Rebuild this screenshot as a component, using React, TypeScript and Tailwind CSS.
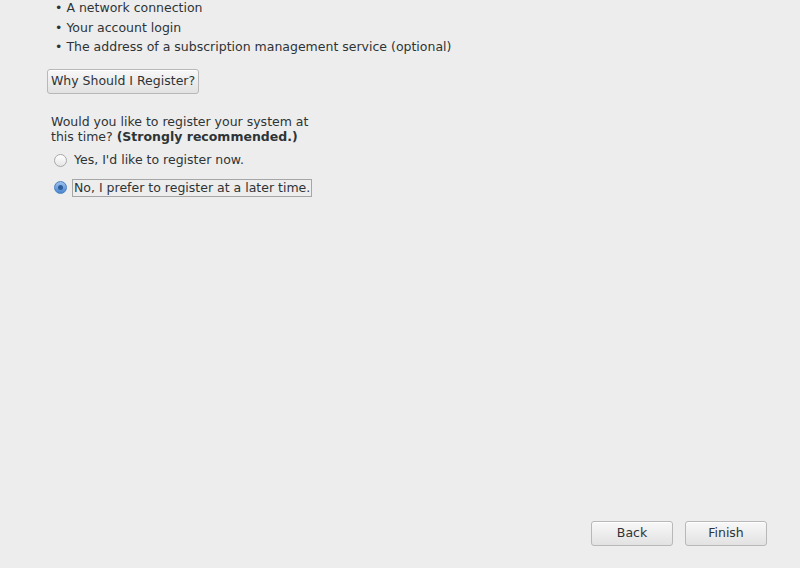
const bullets = [
  'A network connection',
  'Your account login',
  'The address of a subscription management service (optional)',
];

function Radio({ checked }: { checked: boolean }) {
  return checked ? (
    <span className="w-[13px] h-[13px] rounded-full border border-[#4a7fc0] bg-gradient-to-b from-[#9cc0ec] to-[#4a86d0] flex items-center justify-center shrink-0">
      <span className="w-[5px] h-[5px] rounded-full bg-[#2d5d9c]" />
    </span>
  ) : (
    <span className="w-[13px] h-[13px] rounded-full border border-[#a8a8a8] bg-gradient-to-b from-[#ffffff] to-[#e6e6e6] shrink-0" />
  );
}

function Button({ label, className }: { label: string; className: string }) {
  return (
    <button
      className={`h-[25px] rounded-[3px] border border-[#b8b8b8] bg-gradient-to-b from-[#f8f8f8] to-[#e2e2e2] text-[#2e3436] shadow-[inset_0_1px_0_#fff] ${className}`}
    >
      {label}
    </button>
  );
}

export default function App() {
  return (
    <div className="w-[800px] h-[568px] bg-[#ededed] flex flex-col font-['DejaVu_Sans',sans-serif] text-[12.5px] text-[#2e3436] overflow-hidden">
      {/* Requirements */}
      <ul className="pl-[55px] mt-[-2px] leading-[19.5px]">
        {bullets.map((b) => (
          <li key={b} className="flex gap-[4px]">
            <span>•</span>
            {b}
          </li>
        ))}
      </ul>

      <div className="pl-[47px] mt-[12px]">
        <Button label="Why Should I Register?" className="w-[152px]" />
      </div>

      {/* Question */}
      <p className="pl-[51px] mt-[20px] leading-[15px]">
        Would you like to register your system at
        <br />
        this time? <span className="font-bold">(Strongly recommended.)</span>
      </p>

      <div className="pl-[54px] mt-[8px] flex flex-col gap-[9px]">
        <label className="flex items-center gap-[6px] h-[18px]">
          <Radio checked={false} />
          <span className="pl-[1px]">Yes, I'd like to register now.</span>
        </label>
        <label className="flex items-center gap-[5px] h-[18px]">
          <Radio checked />
          <span className="border border-[#a6a6a6] px-[1px] leading-[16px]">No, I prefer to register at a later time.</span>
        </label>
      </div>

      {/* Footer */}
      <div className="mt-auto mb-[22px] flex justify-end gap-[12px] pr-[33px]">
        <Button label="Back" className="w-[82px]" />
        <Button label="Finish" className="w-[82px]" />
      </div>
    </div>
  );
}
